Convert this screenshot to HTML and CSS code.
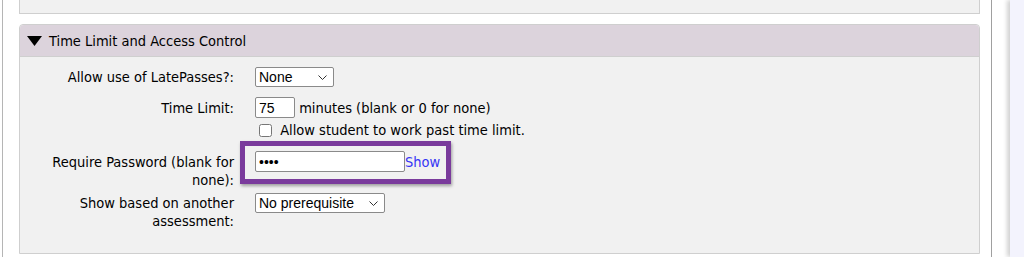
FILE: index.html
```html
<!doctype html>
<html>

<head>
  <meta charset="utf-8">
  <title>Assessment Settings</title>
  <link rel="stylesheet" href="styles.css">
</head>

<body>
  <div class="page">
    <div class="main">
      <div class="block block-prev"></div>

      <div class="block">
        <div class="block-head">
          <svg class="caret" width="15" height="10" viewBox="0 0 15 10"><polygon points="0,0 15,0 7.5,10" fill="#000"/></svg>
          <span>Time Limit and Access Control</span>
        </div>
        <div class="block-body">

          <div class="row">
            <label class="lbl">Allow use of LatePasses?:</label>
            <div class="fld">
              <span class="sel-wrap">
                <select class="sel-short">
                  <option>None</option>
                </select>
                <svg class="chev" width="9" height="5" viewBox="0 0 9 5"><polyline points="0.5,0.5 4.5,4.5 8.5,0.5" fill="none" stroke="#333" stroke-width="1"/></svg>
              </span>
            </div>
          </div>

          <div class="row row-time">
            <label class="lbl">Time Limit:</label>
            <div class="fld">
              <input type="text" class="txt-short" value="75"> minutes (blank or 0 for none)<br>
              <label class="chk"><input type="checkbox"> Allow student to work past time limit.</label>
            </div>
          </div>

          <div class="row row-pw">
            <label class="lbl">Require Password (blank for none):</label>
            <div class="fld">
              <span class="highlight">
                <input type="password" class="txt-pw" value="1234"><a href="#" class="show-link">Show</a>
              </span>
            </div>
          </div>

          <div class="row row-last">
            <label class="lbl">Show based on another assessment:</label>
            <div class="fld">
              <span class="sel-wrap">
                <select class="sel-long">
                  <option>No prerequisite</option>
                </select>
                <svg class="chev" width="9" height="5" viewBox="0 0 9 5"><polyline points="0.5,0.5 4.5,4.5 8.5,0.5" fill="none" stroke="#333" stroke-width="1"/></svg>
              </span>
            </div>
          </div>

        </div>
      </div>
    </div>
    <div class="side"></div>
  </div>
</body>

</html>
```

FILE: styles.css
```css
html, body {
  margin: 0;
  height: 257px;
  overflow: hidden;
  background: #fff;
}

body {
  font-family: "DejaVu Sans Condensed", "DejaVu Sans", sans-serif;
  font-size: 14.5px;
  color: #000;
}

.page {
  display: flex;
  height: 257px;
}

.main {
  margin-left: 2px;
  border-left: 1px solid #b5b5b5;
  border-right: 1px solid #a0a0a0;
  padding-left: 16px;
  padding-right: 11px;
  box-sizing: border-box;
  width: 990px;
}

.side {
  flex: 1;
  margin-left: 18px;
  background: #f3f3fd;
  box-shadow: -3px 0 4px rgba(0, 0, 0, 0.18);
}

.block {
  border: 1px solid #cfcfcf;
  background: #f1f1f1;
  border-radius: 4px 4px 0 0;
  margin-top: 10px;
}

.block-prev {
  height: 13px;
  margin-top: 0;
  border-top: none;
  border-radius: 0;
}

.block-head {
  background: #dcd3dc;
  border-bottom: 1px solid #cfcfcf;
  height: 31px;
  display: flex;
  align-items: center;
  padding-left: 7px;
  border-radius: 4px 4px 0 0;
}

.caret {
  margin-right: 7px;
  margin-top: 1px;
}

.block-body {
  padding: 10px 0 23px 14px;
}

.row {
  display: grid;
  grid-template-columns: 200px auto;
  column-gap: 21px;
  align-items: baseline;
  line-height: 18px;
  margin-bottom: 10px;
}

.lbl {
  text-align: right;
}

.fld {
  line-height: 18px;
}

.row-time {
  margin-bottom: 0;
}

.row-pw {
  margin-bottom: 4px;
}

.row-last {
  margin-bottom: 0;
}

select, input[type=text], input[type=password] {
  font-family: "Liberation Sans", Arial, sans-serif;
  font-size: 14px;
  box-sizing: border-box;
  margin: 0;
  background: #fff;
  border: 1px solid #8a8a8a;
  border-radius: 2px;
  color: #000;
}

.sel-wrap {
  position: relative;
  display: inline-block;
}

select {
  -webkit-appearance: none;
  appearance: none;
  height: 20px;
  padding: 0 3px;
}

.chev {
  position: absolute;
  right: 7px;
  top: 8px;
  pointer-events: none;
}

.sel-short {
  width: 79px;
}

.sel-long {
  width: 130px;
}

.txt-short {
  width: 40px;
  height: 21px;
  padding: 0 3px;
  margin-right: 2px;
}

.txt-pw {
  width: 150px;
  height: 21px;
  padding: 0 3px;
}

.chk {
  display: inline-block;
  padding-top: 2px;
}

.chk input {
  width: 13px;
  height: 13px;
  margin: 4px;
  vertical-align: -2px;
}

.highlight {
  display: inline-block;
  margin-left: -15px;
  padding: 5px 6px 7px 10px;
  border: 5px solid #7a3b9c;
  box-shadow: 1px 2px 3px rgba(0, 0, 0, 0.35);
}

.show-link {
  color: #3535f5;
  text-decoration: none;
}
```
